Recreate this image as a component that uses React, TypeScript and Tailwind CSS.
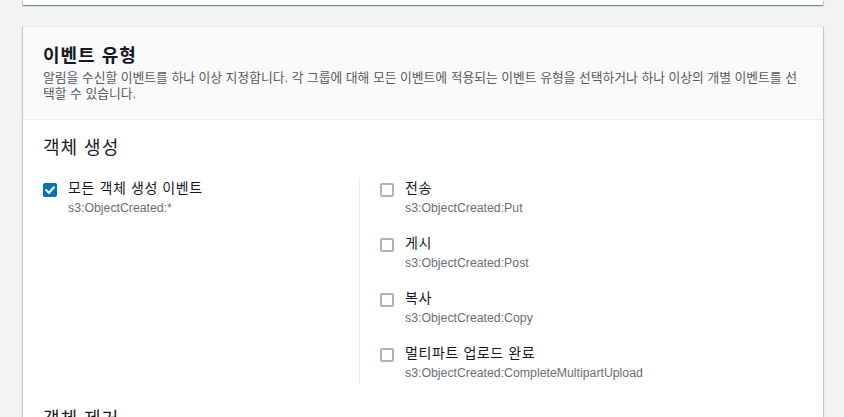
import React from "react";

const font = { fontFamily: '"Liberation Sans", "Noto Sans CJK KR", sans-serif' };

const Checkbox = ({ checked }: { checked?: boolean }) => {
  if (checked) {
    return (
      <span className="mt-[5px] flex h-[14px] w-[14px] shrink-0 items-center justify-center rounded-[2px] bg-[#0073bb]">
        <svg viewBox="0 0 14 14" className="h-[14px] w-[14px]">
          <path d="M3.2 7.2 L6 9.9 L10.9 4.3" fill="none" stroke="#fff" strokeWidth="2.2" strokeLinecap="round" strokeLinejoin="round" />
        </svg>
      </span>
    );
  }
  return <span className="mt-[5px] h-[14px] w-[14px] shrink-0 rounded-[2px] border-2 border-[#aab7b8] bg-white" />;
};

const EventOption = ({ label, code, checked }: { label: string; code: string; checked?: boolean }) => {
  return (
    <div className="flex items-start gap-[11px]">
      <Checkbox checked={checked} />
      <div className="flex flex-col">
        <span className="text-[14px] leading-[20px] tracking-[0.6px] text-[#16191f]">{label}</span>
        <span className="mt-[2px] text-[12.3px] leading-[16px] text-[#687078]">{code}</span>
      </div>
    </div>
  );
};

export default function App() {
  return (
    <div className="h-[417px] overflow-hidden bg-[#f2f3f3]" style={font}>
      <div className="ml-[23px] h-[5px] w-[800px] bg-white shadow-[0_1px_1px_0_rgba(0,28,36,0.3),1px_1px_1px_0_rgba(0,28,36,0.15),-1px_1px_1px_0_rgba(0,28,36,0.15)]" />

      <div className="ml-[23px] mt-[21px] w-[800px] border-t border-[#eaeded] bg-white shadow-[0_1px_1px_0_rgba(0,28,36,0.3),1px_1px_1px_0_rgba(0,28,36,0.15),-1px_1px_1px_0_rgba(0,28,36,0.15)]">
        <div className="border-b border-[#eaeded] bg-[#fafafa] px-[20px] pb-[17px] pt-[18px]">
          <h2 className="text-[18px] font-bold leading-[22px] tracking-[1px] text-[#16191f]">이벤트 유형</h2>
          <p className="mt-[3px] break-all text-[12.8px] leading-[16px] text-[#545b64]">
            알림을 수신할 이벤트를 하나 이상 지정합니다. 각 그룹에 대해 모든 이벤트에 적용되는 이벤트 유형을 선택하거나 하나 이상의 개별 이벤트를 선택할 수 있습니다.
          </p>
        </div>

        <div className="px-[20px] pt-[16px]">
          <h3 className="text-[18px] leading-[24px] tracking-[1px] text-[#16191f]">객체 생성</h3>
          <div className="mt-[18px] grid grid-cols-[316px_1fr]">
            <div>
              <EventOption checked label="모든 객체 생성 이벤트" code="s3:ObjectCreated:*" />
            </div>
            <div className="flex flex-col gap-[17px] border-l border-[#eaeded] pb-[3px] pl-[20px]">
              <EventOption label="전송" code="s3:ObjectCreated:Put" />
              <EventOption label="게시" code="s3:ObjectCreated:Post" />
              <EventOption label="복사" code="s3:ObjectCreated:Copy" />
              <EventOption label="멀티파트 업로드 완료" code="s3:ObjectCreated:CompleteMultipartUpload" />
            </div>
          </div>

          <h3 className="mt-[23px] text-[18px] leading-[24px] tracking-[1px] text-[#16191f]">객체 제거</h3>
        </div>
      </div>
    </div>
  );
}
